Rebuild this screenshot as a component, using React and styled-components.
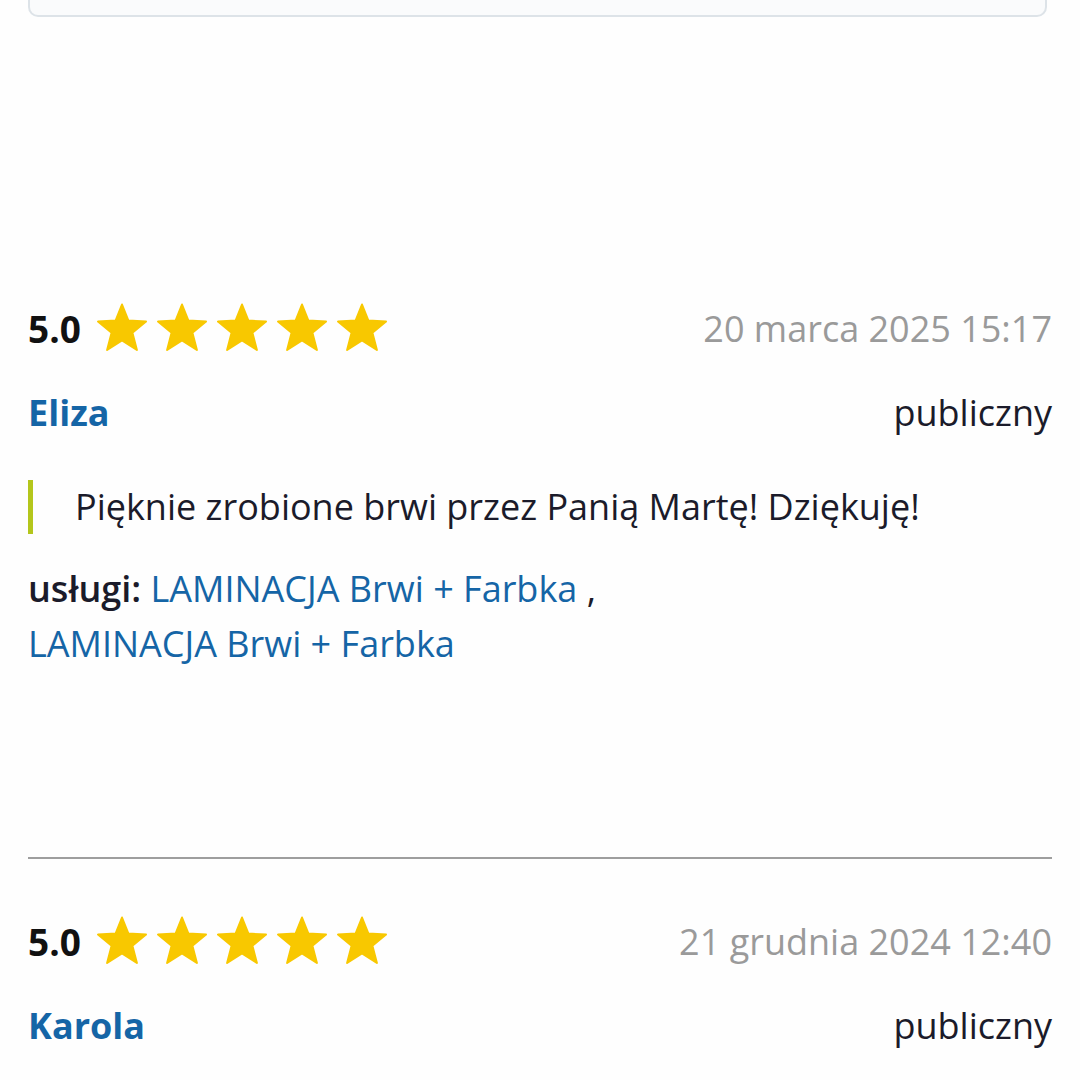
import React from "react";
import styled, { createGlobalStyle } from "styled-components";

const GlobalStyle = createGlobalStyle`
  html, body {
    margin: 0;
    padding: 0;
    background: #fefefe;
  }
  body {
    font-family: "Open Sans", "Liberation Sans", sans-serif;
    color: #1b1b2a;
  }
`;

const Page = styled.div`
  padding: 0 28px;
`;

const TopCard = styled.div`
  height: 15px;
  margin-right: 5px;
  background: #fafbfc;
  border: 2px solid #dde3e8;
  border-top: none;
  border-radius: 0 0 10px 10px;
`;

const Review = styled.div`
  padding-top: ${(p) => p.$top}px;
`;

const Row = styled.div`
  display: flex;
  align-items: center;
  justify-content: space-between;
`;

const Rating = styled.div`
  display: flex;
  align-items: center;
  height: 50px;
`;

const Score = styled.span`
  font-size: 37px;
  font-weight: 700;
  color: #111;
  margin-right: 15px;
`;

const Stars = styled.div`
  display: flex;
  gap: 8px;
`;

const DateText = styled.span`
  font-size: 36px;
  color: #9a9a9a;
`;

const NameRow = styled(Row)`
  margin-top: 35px;
  height: 48px;
`;

const Name = styled.a`
  font-size: 36px;
  font-weight: 700;
  color: #1565a6;
  text-decoration: none;
`;

const Visibility = styled.span`
  font-size: 36px;
  color: #1b1b2a;
`;

const Quote = styled.blockquote`
  margin: 44px 0 0;
  padding-left: 42px;
  border-left: 5px solid #b4c61c;
  font-size: 36px;
  line-height: 54px;
  color: #1b1b2a;
`;

const Services = styled.div`
  margin-top: 27px;
  max-width: 900px;
  font-size: 36px;
  line-height: 55px;
`;

const Label = styled.span`
  font-weight: 600;
  color: #1b1b2a;
`;

const ServiceLink = styled.a`
  display: inline-block;
  white-space: nowrap;
  color: #1565a6;
  text-decoration: none;
`;

const Divider = styled.hr`
  margin: 186px 0 0;
  border: none;
  border-top: 2px solid #9e9e9e;
`;

const Star = () => (
  <svg width="52" height="50" viewBox="0 0 52 50">
    <path
      d="M26 1.5 L32.4 17.6 L50 18.6 L36.4 29.7 L40.9 47 L26 37.3 L11.1 47 L15.6 29.7 L2 18.6 L19.6 17.6 Z"
      fill="#f8c800"
      stroke="#f8c800"
      strokeWidth="2"
      strokeLinejoin="round"
    />
  </svg>
);

const reviews = [
  {
    score: "5.0",
    date: "20 marca 2025 15:17",
    name: "Eliza",
    text: "Pięknie zrobione brwi przez Panią Martę! Dziękuję!",
    services: ["LAMINACJA Brwi + Farbka", "LAMINACJA Brwi + Farbka"],
  },
  {
    score: "5.0",
    date: "21 grudnia 2024 12:40",
    name: "Karola",
    text: "",
    services: [],
  },
];

const ReviewItem = ({ review, top }) => (
  <Review $top={top}>
    <Row>
      <Rating>
        <Score>{review.score}</Score>
        <Stars>
          {[0, 1, 2, 3, 4].map((i) => (
            <Star key={i} />
          ))}
        </Stars>
      </Rating>
      <DateText>{review.date}</DateText>
    </Row>
    <NameRow>
      <Name href="#">{review.name}</Name>
      <Visibility>publiczny</Visibility>
    </NameRow>
    {review.text && <Quote>{review.text}</Quote>}
    {review.services.length > 0 && (
      <Services>
        <Label>usługi: </Label>
        {review.services.map((s, i) => (
          <React.Fragment key={i}>
            <ServiceLink href="#">{s}</ServiceLink>
            {i < review.services.length - 1 && " , "}
          </React.Fragment>
        ))}
      </Services>
    )}
  </Review>
);

export default function App() {
  return (
    <>
      <GlobalStyle />
      <Page>
        <TopCard />
        <ReviewItem review={reviews[0]} top={286} />
        <Divider />
        <ReviewItem review={reviews[1]} top={57} />
      </Page>
    </>
  );
}
